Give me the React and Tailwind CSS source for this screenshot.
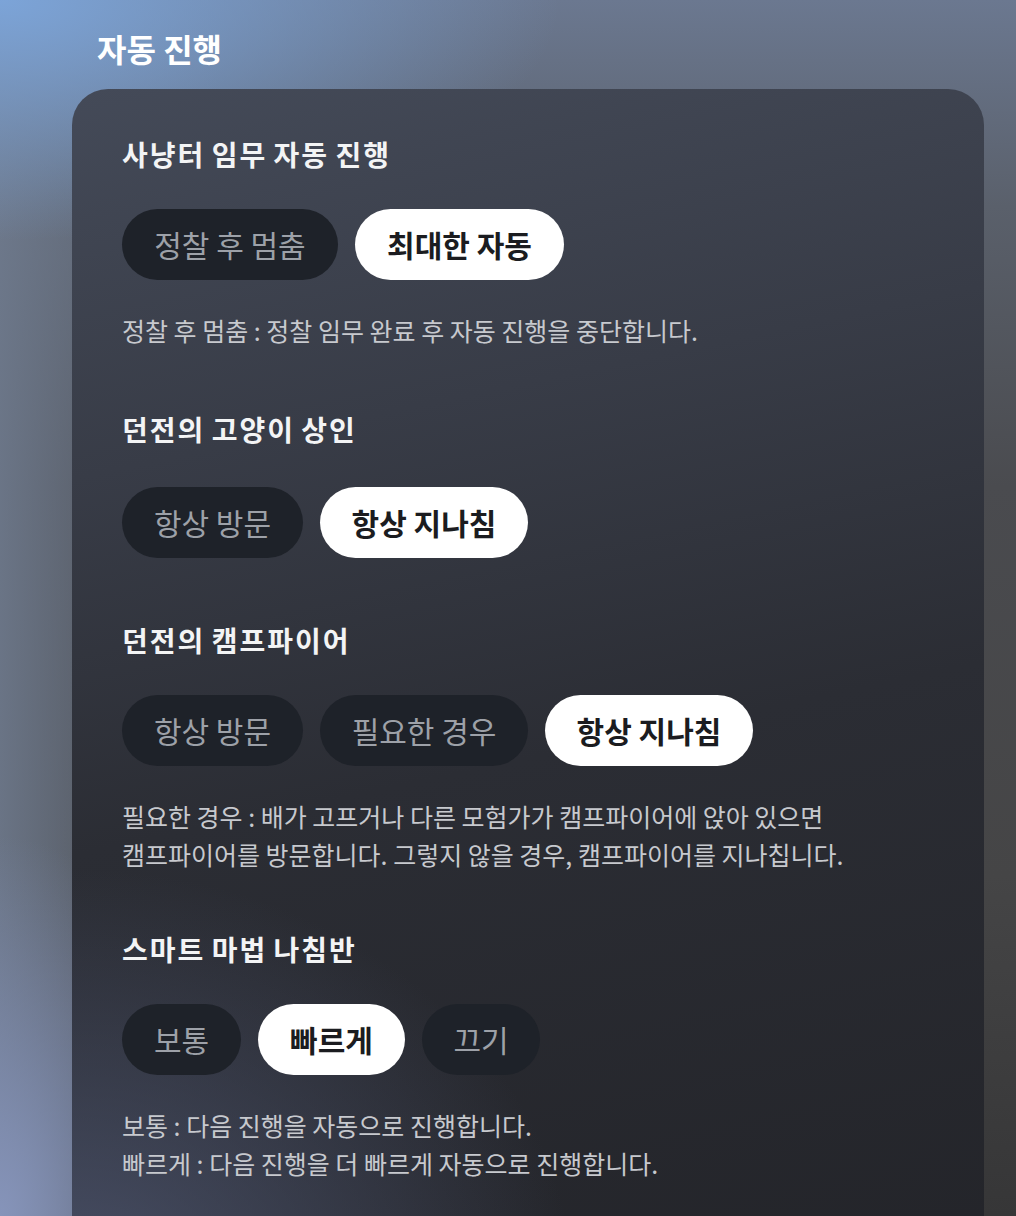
import React from "react";

const FONT = { fontFamily: '"Noto Sans CJK KR", "Noto Sans", sans-serif' };

const sections = [
  {
    title: "사냥터 임무 자동 진행",
    rowGap: "mt-[39px]",
    options: [
      { label: "정찰 후 멈춤", w: "w-[216px]" },
      { label: "최대한 자동", w: "w-[209px]", active: true },
    ],
    desc: ["정찰 후 멈춤 : 정찰 임무 완료 후 자동 진행을 중단합니다."],
    after: "mt-[64px]",
  },
  {
    title: "던전의 고양이 상인",
    rowGap: "mt-[42px]",
    options: [
      { label: "항상 방문", w: "w-[181px]" },
      { label: "항상 지나침", w: "w-[208px]", active: true },
    ],
    desc: [],
    after: "mt-[66px]",
  },
  {
    title: "던전의 캠프파이어",
    rowGap: "mt-[39px]",
    options: [
      { label: "항상 방문", w: "w-[181px]" },
      { label: "필요한 경우", w: "w-[208px]" },
      { label: "항상 지나침", w: "w-[208px]", active: true },
    ],
    desc: [
      "필요한 경우 : 배가 고프거나 다른 모험가가 캠프파이어에 앉아 있으면",
      "캠프파이어를 방문합니다. 그렇지 않을 경우, 캠프파이어를 지나칩니다.",
    ],
    after: "mt-[60px]",
  },
  {
    title: "스마트 마법 나침반",
    rowGap: "mt-[39px]",
    options: [
      { label: "보통", w: "w-[119px]" },
      { label: "빠르게", w: "w-[147px]", active: true },
      { label: "끄기", w: "w-[118px]" },
    ],
    desc: [
      "보통 : 다음 진행을 자동으로 진행합니다.",
      "빠르게 : 다음 진행을 더 빠르게 자동으로 진행합니다.",
    ],
    after: "",
  },
];

function Pill({ label, w, active }) {
  return (
    <button
      type="button"
      className={
        active
          ? `${w} h-[71px] shrink-0 rounded-full bg-white text-[30px] font-bold text-[#1b1c20] flex items-center justify-center`
          : `${w} h-[71px] shrink-0 rounded-full bg-[#1e2229] text-[30px] font-normal text-[#9da1a8] flex items-center justify-center`
      }
    >
      {label}
    </button>
  );
}

function Section({ title, rowGap, options, desc, after }) {
  return (
    <section className="flex flex-col">
      <h3 className="text-[28px] leading-[32px] font-bold text-[#f3f4f5] tracking-[2px] [word-spacing:-2px]">
        {title}
      </h3>
      <div className={`${rowGap} flex gap-[17px]`}>
        {options.map((o, i) => (
          <Pill key={i} {...o} />
        ))}
      </div>
      {desc.length > 0 && (
        <div className="mt-[31px] text-[25px] leading-[38px] text-[#c7c9ce]">
          {desc.map((line, i) => (
            <p key={i} className="whitespace-nowrap">
              {line}
            </p>
          ))}
        </div>
      )}
      {after && <div className={after} />}
    </section>
  );
}

export default function App() {
  return (
    <div
      style={FONT}
      className="w-full h-[1216px] overflow-hidden bg-[radial-gradient(ellipse_560px_240px_at_0%_0%,#7ca4d8_0%,rgba(124,164,216,0)_100%),radial-gradient(ellipse_220px_380px_at_0%_100%,#8694ba_0%,rgba(134,148,186,0)_100%),linear-gradient(90deg,rgba(112,124,144,0.85)_0px,rgba(112,124,144,0.55)_72px,rgba(112,124,144,0)_220px),linear-gradient(180deg,#6b7890_0%,#5a606b_17%,#4a4b4f_40%,#454546_72%,#363637_100%)] pt-[28px] pl-[72px] pr-[32px]"
    >
      <h2 className="pl-[25px] text-[32px] leading-[40px] font-bold text-white">
        자동 진행
      </h2>
      <div className="mt-[21px] h-[1200px] rounded-[36px] bg-[radial-gradient(ellipse_55%_35%_at_0%_100%,rgba(78,86,112,0.85)_0%,rgba(78,86,112,0)_100%),linear-gradient(168deg,#444a58_0%,#383c47_28%,#2b2d34_55%,#232429_100%)] pt-[49px] pl-[50px] pr-[40px]">
        {sections.map((s, i) => (
          <Section key={i} {...s} />
        ))}
      </div>
    </div>
  );
}
